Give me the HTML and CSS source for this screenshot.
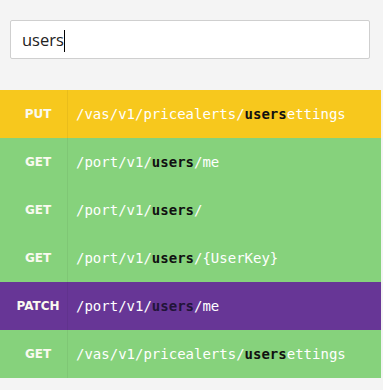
FILE: index.html
```html
<html>

<head>

    <meta name="viewport" content="width=device-width, initial-scale=1.0">

    <title>Buscar endpoints</title>

    <link rel="stylesheet" href="styles.css">

</head>

<body>

    <div class="search">
        <div class="search-box">users<span class="caret"></span></div>
    </div>

    <ul class="endpoints">
        <li class="endpoint put">
            <span class="method">PUT</span>
            <span class="path">/vas/v1/pricealerts/<b>users</b>ettings</span>
        </li>
        <li class="endpoint get">
            <span class="method">GET</span>
            <span class="path">/port/v1/<b>users</b>/me</span>
        </li>
        <li class="endpoint get">
            <span class="method">GET</span>
            <span class="path">/port/v1/<b>users</b>/</span>
        </li>
        <li class="endpoint get">
            <span class="method">GET</span>
            <span class="path">/port/v1/<b>users</b>/{UserKey}</span>
        </li>
        <li class="endpoint patch">
            <span class="method">PATCH</span>
            <span class="path">/port/v1/<b>users</b>/me</span>
        </li>
        <li class="endpoint get">
            <span class="method">GET</span>
            <span class="path">/vas/v1/pricealerts/<b>users</b>ettings</span>
        </li>
    </ul>

</body>

</html>
```

FILE: styles.css
```css
body {
    margin: 0;
    padding: 0;
    background-color: #f4f4f4;
    width: 381px;
}

.search {
    padding: 20px 11px 31px 10px;
}

.search-box {
    height: 37px;
    background-color: #fff;
    border: 1px solid #cfcfcf;
    border-radius: 2px;
    font-family: "Open Sans", sans-serif;
    font-size: 16.5px;
    color: #222;
    line-height: 37px;
    padding-left: 11px;
}

.caret {
    display: inline-block;
    width: 1px;
    height: 22px;
    background-color: #000;
    vertical-align: -6px;
}

.endpoints {
    list-style: none;
    margin: 0;
    padding: 0;
}

.endpoint {
    display: flex;
    align-items: center;
    height: 48px;
    color: #fff;
}

.put {
    background-color: #f7c81d;
}

.get {
    background-color: #86d27c;
}

.patch {
    background-color: #673696;
}

.method {
    box-sizing: border-box;
    width: 68px;
    padding-left: 9px;
    align-self: stretch;
    display: flex;
    align-items: center;
    justify-content: center;
    border-right: 1px solid rgba(0, 0, 0, 0.05);
    font-family: "DejaVu Sans", sans-serif;
    font-weight: bold;
    font-size: 12px;
    color: #fafaf0;
}

.path {
    padding-left: 8px;
    font-family: "DejaVu Sans Mono", monospace;
    font-size: 14px;
}

.path b {
    font-weight: bold;
    color: #111;
}

.patch .path b {
    color: #221439;
}
```
